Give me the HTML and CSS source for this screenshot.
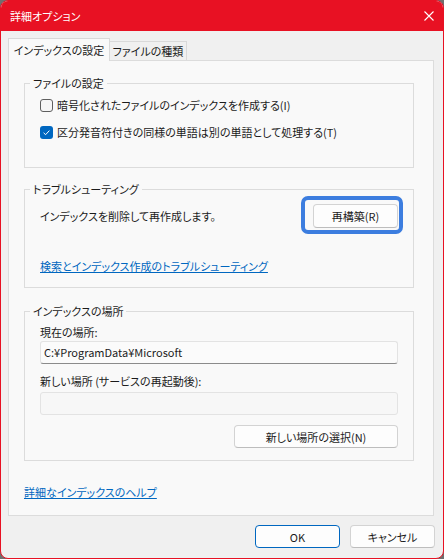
FILE: index.html
```html
<!DOCTYPE html>
<html>

<head>
    <meta charset="UTF-8">
    <title>詳細オプション</title>

    <link rel="stylesheet" href="styles.css">

</head>

<body>

    <div class="window">
        <div class="titlebar">
            <span class="title">詳細オプション</span>
            <svg class="close" width="10" height="10" viewBox="0 0 10 10">
                <path d="M0.5 0.5 L9.5 9.5 M9.5 0.5 L0.5 9.5" stroke="#fff" stroke-width="1.1" fill="none" />
            </svg>
        </div>

        <div class="content">
            <div class="tabs">
                <div class="tab active">インデックスの設定</div>
                <div class="tab">ファイルの種類</div>
            </div>

            <div class="panel">
                <fieldset class="group group-files">
                    <legend>ファイルの設定</legend>
                    <div class="check-row">
                        <span class="checkbox"></span>
                        <span>暗号化されたファイルのインデックスを作成する(I)</span>
                    </div>
                    <div class="check-row">
                        <span class="checkbox checked">
                            <svg width="13" height="13" viewBox="0 0 13 13">
                                <path d="M3.6 6.8 L5.6 8.7 L9.4 4.6" stroke="#fff" stroke-width="1" fill="none" />
                            </svg>
                        </span>
                        <span>区分発音符付きの同様の単語は別の単語として処理する(T)</span>
                    </div>
                </fieldset>

                <fieldset class="group group-trouble">
                    <legend>トラブルシューティング</legend>
                    <div class="rebuild-row">
                        <span>インデックスを削除して再作成します。</span>
                        <button class="btn focused">再構築(R)</button>
                    </div>
                    <a class="link trouble-link" href="#">検索とインデックス作成のトラブルシューティング</a>
                </fieldset>

                <fieldset class="group group-location">
                    <legend>インデックスの場所</legend>
                    <div class="field-label">現在の場所:</div>
                    <div class="textbox readonly">C:¥ProgramData¥Microsoft</div>
                    <div class="field-label second">新しい場所 (サービスの再起動後):</div>
                    <div class="textbox empty"></div>
                    <div class="select-row">
                        <button class="btn wide">新しい場所の選択(N)</button>
                    </div>
                </fieldset>

                <a class="link help-link" href="#">詳細なインデックスのヘルプ</a>
            </div>

            <div class="footer">
                <button class="btn primary">OK</button>
                <button class="btn">キャンセル</button>
            </div>
        </div>
    </div>

</body>

</html>
```

FILE: styles.css
```css
body {
    margin: 0;
    background-color: #6f6f6f;
    font-family: "Noto Sans CJK JP", "Noto Sans", sans-serif;
    font-size: 11px;
    line-height: 16px;
    color: #1b1b1b;
    font-feature-settings: "palt";
}

.window {
    width: 444px;
    height: 559px;
    box-sizing: border-box;
    border: 1px solid #e81123;
    border-radius: 8px;
    background-color: #f0f0f0;
    overflow: hidden;
    display: flex;
    flex-direction: column;
}

.titlebar {
    height: 30px;
    background-color: #e81123;
    color: white;
    display: flex;
    align-items: center;
    justify-content: space-between;
    padding: 0 9px 0 9px;
    flex-shrink: 0;
}

    .titlebar .title {
        margin-top: -1px;
    }

.content {
    padding: 7px 9px 0 7px;
}

.tabs {
    display: flex;
    align-items: flex-end;
    margin-bottom: -1px;
    position: relative;
    z-index: 1;
}

.tab {
    box-sizing: border-box;
    height: 19px;
    width: 77px;
    margin-bottom: 1px;
    border: 1px solid #d9d9d9;
    border-bottom: none;
    border-left: none;
    background-color: #f0f0f0;
    text-align: center;
    line-height: 19px;
    white-space: nowrap;
}

    .tab.active {
        height: 23px;
        width: 102px;
        margin-bottom: 0;
        border-left: 1px solid #d9d9d9;
        background-color: #f9f9f9;
        line-height: 22px;
    }

.panel {
    box-sizing: border-box;
    height: 456px;
    background-color: #f9f9f9;
    border: 1px solid #dcdcdc;
    padding: 14px 19px 0 15px;
}

.group {
    margin: 0;
    padding: 0 15px;
    border: 1px solid #dcdcdc;
    min-width: 0;
}

    .group legend {
        padding: 0 3px;
        margin-left: -10px;
        line-height: 16px;
    }

.group-files {
    padding-top: 4px;
    padding-bottom: 25px;
}

.group-trouble {
    margin-top: 13px;
    padding-top: 7px;
    padding-bottom: 13px;
}

.group-location {
    margin-top: 15px;
    padding-top: 5px;
    padding-bottom: 12px;
}

.check-row {
    display: flex;
    align-items: center;
    height: 20px;
}

    .check-row + .check-row {
        margin-top: 7px;
    }

.checkbox {
    box-sizing: border-box;
    width: 13px;
    height: 13px;
    margin-right: 4px;
    border: 1px solid #5f5f5f;
    border-radius: 3px;
    background-color: #f6f6f6;
    flex-shrink: 0;
}

    .checkbox.checked {
        border: none;
        background-color: #0067c0;
    }

        .checkbox.checked svg {
            display: block;
        }

.rebuild-row {
    display: flex;
    align-items: center;
    justify-content: space-between;
}

.btn {
    box-sizing: border-box;
    height: 23px;
    width: 85px;
    padding: 0;
    font-family: inherit;
    font-size: 11px;
    color: #1b1b1b;
    background-color: #fdfdfd;
    border: 1px solid #d3d3d3;
    border-bottom-color: #bdbdbd;
    border-radius: 4px;
    font-feature-settings: "palt";
}

    .btn.focused {
        position: relative;
        height: 24px;
    }

        .btn.focused::after {
            content: "";
            position: absolute;
            top: -9px;
            left: -13px;
            right: -6px;
            bottom: -7px;
            border: 4px solid #3c7ddf;
            border-radius: 7px;
        }

    .btn.primary {
        border: 1px solid #0067c0;
    }

    .btn.wide {
        width: 164px;
    }

.link {
    display: block;
    width: max-content;
    color: #0067c0;
    text-decoration: underline;
}

.trouble-link {
    margin-top: 30px;
}

.help-link {
    margin-top: 23px;
}

.field-label.second {
    margin-top: 9px;
}

.textbox {
    box-sizing: border-box;
    height: 23px;
    margin-top: 1px;
    padding-left: 3px;
    line-height: 21px;
    background-color: #fbfbfb;
    border: 1px solid #e3e3e3;
    border-radius: 3px;
}

    .textbox.readonly {
        border-bottom-color: #8b8b8b;
    }

    .textbox.empty {
        margin-top: 3px;
        background-color: #f7f7f7;
    }

.select-row {
    display: flex;
    justify-content: flex-end;
    margin-top: 10px;
}

.footer {
    display: flex;
    justify-content: flex-end;
    gap: 10px;
    margin-top: 9px;
    margin-right: -1px;
}
```
